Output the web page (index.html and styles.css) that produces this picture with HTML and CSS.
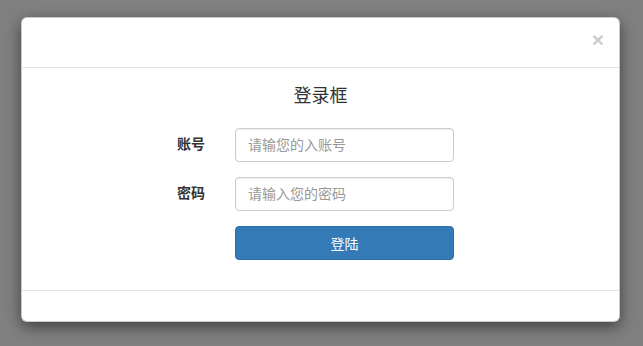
FILE: index.html
```html
<!DOCTYPE html>
<html lang="zh-CN">
<head>
<meta charset="UTF-8">
<meta name="viewport" content="width=device-width, initial-scale=1.0">
<title>登录框</title>
<link rel="stylesheet" href="styles.css">
</head>
<body>
<div class="backdrop">
    <div class="modal-dialog">
        <div class="modal-header">
            <button class="close" type="button">&times;</button>
        </div>
        <div class="modal-body">
            <h4 class="modal-title">登录框</h4>
            <form class="login-form">
                <div class="form-group">
                    <label for="account">账号</label>
                    <input type="text" id="account" class="form-control" placeholder="请输您的入账号">
                </div>
                <div class="form-group">
                    <label for="password">密码</label>
                    <input type="password" id="password" class="form-control" placeholder="请输入您的密码">
                </div>
                <div class="form-group">
                    <span></span>
                    <button type="button" class="btn btn-primary">登陆</button>
                </div>
            </form>
        </div>
        <div class="modal-footer"></div>
    </div>
</div>
</body>
</html>
```

FILE: styles.css
```css
* {
    margin: 0;
    padding: 0;
    box-sizing: border-box;
}
body {
    font-family: "Liberation Sans", "Noto Sans CJK SC", sans-serif;
    font-size: 14px;
    line-height: 1.42857;
    color: #333;
    background: #808080;
}
.backdrop {
    min-height: 100vh;
    padding-top: 17px;
}
.modal-dialog {
    width: 599px;
    margin-left: 21px;
    background: #fff;
    border: 1px solid rgba(0, 0, 0, 0.2);
    border-radius: 6px;
    box-shadow: 0 5px 15px rgba(0, 0, 0, 0.5);
}
.modal-header {
    height: 50px;
    padding: 15px;
    border-bottom: 1px solid #e5e5e5;
}
.close {
    float: right;
    margin-top: -4px;
    border: 0;
    background: transparent;
    font-family: "Liberation Sans", sans-serif;
    font-size: 21px;
    font-weight: bold;
    line-height: 1;
    color: #000;
    opacity: 0.2;
    cursor: pointer;
}
.modal-body {
    padding: 15px;
}
.modal-title {
    margin: 3px 0 22px;
    text-align: center;
    font-size: 18px;
    font-weight: 400;
    line-height: 20px;
}
.form-group {
    display: grid;
    grid-template-columns: 168px 219px;
    column-gap: 30px;
    align-items: center;
    margin-bottom: 15px;
}
.form-group label {
    text-align: right;
    font-weight: bold;
}
.form-control {
    height: 34px;
    padding: 6px 12px;
    font-family: inherit;
    font-size: 14px;
    color: #555;
    border: 1px solid #ccc;
    border-radius: 4px;
    box-shadow: inset 0 1px 1px rgba(0, 0, 0, 0.075);
}
.form-control::placeholder {
    color: #999;
}
.btn {
    height: 34px;
    font-family: inherit;
    font-size: 14px;
    border: 1px solid transparent;
    border-radius: 4px;
    cursor: pointer;
}
.btn-primary {
    color: #fff;
    background: #337ab7;
    border-color: #2e6da4;
}
.modal-footer {
    height: 31px;
    border-top: 1px solid #e5e5e5;
}
```
